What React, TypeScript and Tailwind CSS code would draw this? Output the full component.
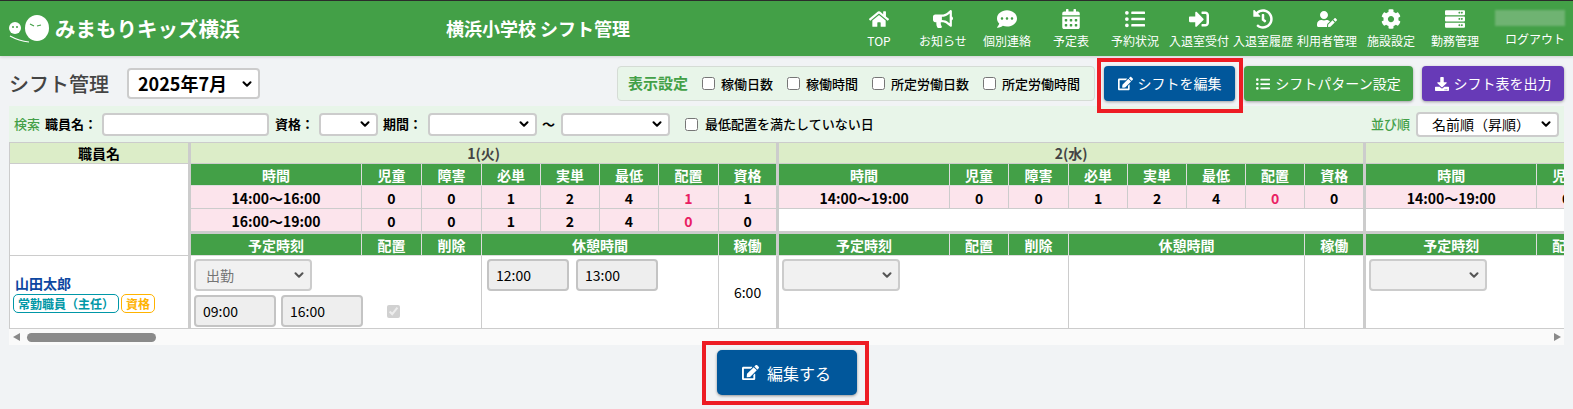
import { ChevronDown } from "lucide-react"
import type { ReactNode } from "react"
import {
  FaBullhorn,
  FaCalendarAlt,
  FaCog,
  FaCommentDots,
  FaDownload,
  FaEdit,
  FaHistory,
  FaHome,
  FaListUl,
  FaServer,
  FaSignInAlt,
  FaUserEdit,
} from "react-icons/fa"

const navItems = [
  { label: "TOP", icon: <FaHome /> },
  { label: "お知らせ", icon: <FaBullhorn /> },
  { label: "個別連絡", icon: <FaCommentDots /> },
  { label: "予定表", icon: <FaCalendarAlt /> },
  { label: "予約状況", icon: <FaListUl /> },
  { label: "入退室受付", icon: <FaSignInAlt /> },
  { label: "入退室履歴", icon: <FaHistory /> },
  { label: "利用者管理", icon: <FaUserEdit /> },
  { label: "施設設定", icon: <FaCog /> },
  { label: "勤務管理", icon: <FaServer /> },
]

const colWidths = [
  182,
  171, 60, 60, 59, 59, 59, 60, 60,
  171, 59, 60, 59, 59, 59, 59, 61,
  171, 59, 60, 59, 59, 59, 59, 61,
]

const statHeaders = ["児童", "障害", "必単", "実単", "最低", "配置", "資格"]

const days = [
  {
    label: "1(火)",
    rows: [
      ["14:00〜16:00", "0", "0", "1", "2", "4", "1", "1"],
      ["16:00〜19:00", "0", "0", "1", "2", "4", "0", "0"],
    ],
  },
  { label: "2(水)", rows: [["14:00〜19:00", "0", "0", "1", "2", "4", "0", "0"]] },
  { label: "3(木)", rows: [["14:00〜19:00", "0", "0", "1", "2", "4", "0", "0"]] },
]

const thGreen =
  "bg-[#43a047] text-white font-bold text-[14px] leading-[18px] border-r border-b border-[#dddddd] p-0 pt-px text-center"
const tdPink =
  "bg-[#fce4ec] font-bold text-[14px] leading-[18px] border-r border-b border-[#cccccc] p-0 pt-[2px] text-center"
const lastCol = "border-r-[3px] border-r-[#cccccc]"

const Select = ({
  className,
  value,
  disabled,
  bold,
}: {
  className: string
  value?: string
  disabled?: boolean
  bold?: boolean
}) => (
  <div className={`relative shrink-0 ${className}`}>
    <select
      disabled={disabled}
      className={`appearance-none w-full h-full rounded-[4px] border-2 border-[#cccccc] ${
        disabled ? "bg-[#f1f1f1] text-[#757575]" : "bg-white text-black"
      } ${bold ? "font-bold text-[18px] pl-[9px]" : "font-normal text-[14px] pl-[10px]"}`}
    >
      <option>{value ?? ""}</option>
    </select>
    <ChevronDown
      size={14}
      strokeWidth={3.5}
      className={`absolute right-[6px] top-1/2 -translate-y-1/2 pointer-events-none ${
        disabled ? "text-[#555555]" : "text-black"
      }`}
    />
  </div>
)

const TimeBox = ({ value, className }: { value: string; className: string }) => (
  <input
    readOnly
    value={value}
    className={`h-[32px] rounded-[4px] border-2 border-[#c4c4c4] bg-[#eeeeee] px-[7px] text-[14px] text-black ${className}`}
  />
)

const Check = ({ label }: { label: string }) => (
  <label className="flex items-center gap-[6px] text-[13px] font-medium text-black whitespace-nowrap">
    <input type="checkbox" className="w-[13px] h-[13px] m-0" />
    {label}
  </label>
)

const ActionButton = ({
  icon,
  label,
  className,
}: {
  icon: ReactNode
  label: string
  className: string
}) => (
  <button
    className={`h-[35px] rounded-[4px] text-white text-[14px] flex items-center justify-center gap-[5px] shadow-[0_1px_3px_rgba(0,0,0,0.35)] ${className}`}
  >
    {icon}
    {label}
  </button>
)

const Logo = () => (
  <svg width="46" height="30" viewBox="0 0 46 30" className="shrink-0">
    <ellipse cx="28" cy="14" rx="12" ry="13" fill="#ffffff" />
    <circle cx="6" cy="14" r="6" fill="#ffffff" />
    <path d="M21 10 l4 2 M28 12 l4 -1" stroke="#43a047" strokeWidth="1.2" fill="none" />
    <circle cx="4" cy="13" r="1" fill="#43a047" />
    <circle cx="8" cy="13" r="1" fill="#43a047" />
    <path d="M1 22 Q10 27 20 28" stroke="#ffffff" strokeWidth="1.2" fill="none" />
  </svg>
)

export default function App() {
  return (
    <div className="w-[1573px] h-[409px] overflow-hidden bg-[#f1f3f5] font-['Noto_Sans_CJK_JP','Noto_Sans',sans-serif]">
      <header className="h-[56px] bg-[#43a047] border-t border-[#2b2b2b] flex items-center text-white shadow-[0_1px_3px_rgba(0,0,0,0.15)]">
        <div className="w-[442px] pl-[9px] flex items-center gap-[0px]">
          <Logo />
          <span className="text-[20.5px] font-bold whitespace-nowrap">みまもりキッズ横浜</span>
        </div>
        <h1 className="w-[405px] text-[18px] font-bold pl-[4px] whitespace-nowrap">横浜小学校 シフト管理</h1>
        <nav className="flex">
          {navItems.map((item) => (
            <div key={item.label} className="w-[64px] flex flex-col items-center gap-[3px]">
              <span className="text-[20px] h-[22px] flex items-center">{item.icon}</span>
              <span className="text-[12px] leading-[16px] whitespace-nowrap">{item.label}</span>
            </div>
          ))}
        </nav>
        <div className="flex flex-col items-end ml-[8px] w-[70px]">
          <div className="w-[70px] h-[16px] bg-[#6fb372] blur-[1px]" />
          <span className="text-[12px] leading-[16px] mt-[5px] whitespace-nowrap">ログアウト</span>
        </div>
      </header>

      <div className="px-[9px] mt-[10px] h-[35px] flex items-center">
        <h2 className="text-[20px] font-medium text-[#444444] w-[118px] whitespace-nowrap">シフト管理</h2>
        <Select className="w-[133px] h-[31px]" value="2025年7月" bold />
        <div className="ml-auto flex items-center">
          <div className="w-[478px] h-[35px] flex items-center gap-[14px] pl-[10px] rounded-[4px] border border-[#d5dcd5] bg-[#e8f5e9]">
            <span className="text-[15px] font-bold text-[#43a047]">表示設定</span>
            <Check label="稼働日数" />
            <Check label="稼働時間" />
            <Check label="所定労働日数" />
            <Check label="所定労働時間" />
          </div>
          <div className="relative ml-[9px]">
            <ActionButton icon={<FaEdit size={15} />} label="シフトを編集" className="w-[131px] bg-[#01579b]" />
            <div className="absolute -left-[7px] -right-[8px] -top-[8px] -bottom-[12px] border-[4px] border-[#ed1c24]" />
          </div>
          <ActionButton
            icon={<FaListUl size={14} />}
            label="シフトパターン設定"
            className="w-[169px] ml-[9px] bg-[#43a047]"
          />
          <ActionButton
            icon={<FaDownload size={14} />}
            label="シフト表を出力"
            className="w-[142px] ml-[9px] bg-[#673ab7]"
          />
        </div>
      </div>

      <div className="mx-[9px] mt-[5px] h-[36px] bg-[#e8f5e9] flex items-center pl-[5px] text-[13px] font-bold text-black whitespace-nowrap">
        <span className="text-[#43a047] font-medium mr-[5px]">検索</span>
        <span className="w-[57px]">職員名：</span>
        <input className="w-[167px] h-[23px] rounded-[4px] border-2 border-[#cccccc] bg-white" />
        <span className="ml-[6px] w-[44px]">資格：</span>
        <Select className="w-[59px] h-[23px]" />
        <span className="ml-[5px] w-[45px]">期間：</span>
        <Select className="w-[109px] h-[23px]" />
        <span className="ml-[5px] mr-[6px] text-[13px] font-bold">〜</span>
        <Select className="w-[109px] h-[23px]" />
        <label className="ml-[15px] flex items-center gap-[7px] font-medium">
          <input type="checkbox" className="w-[13px] h-[13px] m-0" />
          最低配置を満たしていない日
        </label>
        <span className="ml-auto mr-[6px] text-[#43a047] font-medium">並び順</span>
        <Select className="w-[143px] h-[25px] mr-[5px] [&>select]:pl-[14px]" value="名前順（昇順）" />
      </div>

      <div className="mx-[9px] overflow-hidden">
        <table className="table-fixed border-separate border-spacing-0 w-[1944px]">
          <colgroup>
            {colWidths.map((w, i) => (
              <col key={i} style={{ width: w }} />
            ))}
          </colgroup>
          <tbody>
            <tr className="h-[22px]">
              <th className={`bg-[#dcedc8] text-[14px] leading-[18px] font-bold border-l border-t border-b border-[#cccccc] p-0 ${lastCol}`}>
                職員名
              </th>
              {days.map((d) => (
                <th
                  key={d.label}
                  colSpan={8}
                  className={`bg-[#dcedc8] text-[14px] leading-[18px] font-bold text-[#444444] border-t border-b border-[#cccccc] p-0 ${lastCol}`}
                >
                  {d.label}
                </th>
              ))}
            </tr>
            <tr className="h-[22px]">
              <td rowSpan={4} className={`bg-white border-l border-b border-[#cccccc] ${lastCol}`} />
              {days.map((d) => (
                <HeaderCells key={d.label} />
              ))}
            </tr>
            {[0, 1].map((r) => (
              <tr key={r} className="h-[23px]">
                {days.map((d) =>
                  d.rows[r] ? (
                    d.rows[r].map((v, i) => (
                      <td
                        key={d.label + i}
                        className={`${tdPink} ${i === 6 ? "text-[#e91e63]" : "text-black"} ${i === 7 ? lastCol : ""}`}
                      >
                        {v}
                      </td>
                    ))
                  ) : (
                    <td key={d.label} colSpan={8} className={`bg-white border-b border-[#cccccc] ${lastCol}`} />
                  )
                )}
              </tr>
            ))}
            <tr className="h-[24px]">
              {days.map((d) => (
                <PlanHeaderCells key={d.label} />
              ))}
            </tr>
            <tr className="h-[73px]">
              <td className={`bg-white border-l border-b border-[#cccccc] pl-[3px] pt-[17px] align-top ${lastCol}`}>
                <div className="text-[14px] font-bold text-[#0d47a1] leading-[20px] pl-[2px]">山田太郎</div>
                <div className="flex gap-[2px] mt-[1px] font-bold text-[12px] leading-[17px]">
                  <span className="px-[4px] rounded-[5px] border border-[#0097a7] text-[#0097a7] whitespace-nowrap bg-white">
                    常勤職員（主任）
                  </span>
                  <span className="px-[4px] rounded-[5px] border border-[#ffb300] text-[#ffb300] whitespace-nowrap bg-white">
                    資格
                  </span>
                </div>
              </td>
              <td colSpan={3} className="bg-white border-r border-b border-[#cccccc] align-top p-0 pl-[3px] pt-[3px]">
                <Select className="w-[118px] h-[32px]" value="出勤" disabled />
                <div className="flex items-center gap-[5px] mt-[4px]">
                  <TimeBox value="09:00" className="w-[82px]" />
                  <TimeBox value="16:00" className="w-[82px]" />
                  <input type="checkbox" checked disabled readOnly className="ml-[19px] w-[13px] h-[13px] m-0" />
                </div>
              </td>
              <td colSpan={4} className="bg-white border-r border-b border-[#cccccc] align-top p-0 pl-[5px] pt-[3px]">
                <div className="flex gap-[7px]">
                  <TimeBox value="12:00" className="w-[82px]" />
                  <TimeBox value="13:00" className="w-[82px]" />
                </div>
              </td>
              <td className={`bg-white border-b border-[#cccccc] text-center text-[14px] text-black p-0 ${lastCol}`}>6:00</td>
              {[0, 1].map((i) => (
                <EmptyDayCells key={i} />
              ))}
            </tr>
          </tbody>
        </table>
      </div>

      <div className="mx-[9px] h-[16px] bg-[#fafafa] flex items-center pl-[4px] pr-[3px]">
        <span className="w-0 h-0 border-y-[4px] border-y-transparent border-r-[7px] border-r-[#8a8a8a]" />
        <span className="ml-[7px] w-[129px] h-[9px] rounded-full bg-[#8a8a8a]" />
        <span className="ml-auto w-0 h-0 border-y-[4px] border-y-transparent border-l-[7px] border-l-[#8a8a8a]" />
      </div>

      <div className="flex justify-center mt-[5px]">
        <div className="relative">
          <button className="w-[140px] h-[45px] rounded-[5px] bg-[#01579b] text-white text-[16px] flex items-center justify-center gap-[8px] shadow-[0_1px_3px_rgba(0,0,0,0.4)]">
            <FaEdit size={17} />
            編集する
          </button>
          <div className="absolute -left-[15px] -right-[12px] -top-[9px] -bottom-[10px] border-[4px] border-[#ed1c24]" />
        </div>
      </div>
    </div>
  )
}

const HeaderCells = () => (
  <>
    <th className={thGreen}>時間</th>
    {statHeaders.map((h, i) => (
      <th key={h} className={`${thGreen} ${i === 6 ? lastCol : ""}`}>
        {h}
      </th>
    ))}
  </>
)

const PlanHeaderCells = () => (
  <>
    <th className={`${thGreen} border-t-2 border-t-[#cccccc]`}>予定時刻</th>
    <th className={`${thGreen} border-t-2 border-t-[#cccccc]`}>配置</th>
    <th className={`${thGreen} border-t-2 border-t-[#cccccc]`}>削除</th>
    <th colSpan={4} className={`${thGreen} border-t-2 border-t-[#cccccc]`}>
      休憩時間
    </th>
    <th className={`${thGreen} border-t-2 border-t-[#cccccc] ${lastCol}`}>稼働</th>
  </>
)

const EmptyDayCells = () => (
  <>
    <td colSpan={3} className="bg-white border-r border-b border-[#cccccc] align-top p-0 pl-[3px] pt-[3px]">
      <Select className="w-[118px] h-[32px]" disabled />
    </td>
    <td colSpan={4} className="bg-white border-r border-b border-[#cccccc]" />
    <td className={`bg-white border-b border-[#cccccc] ${lastCol}`} />
  </>
)
